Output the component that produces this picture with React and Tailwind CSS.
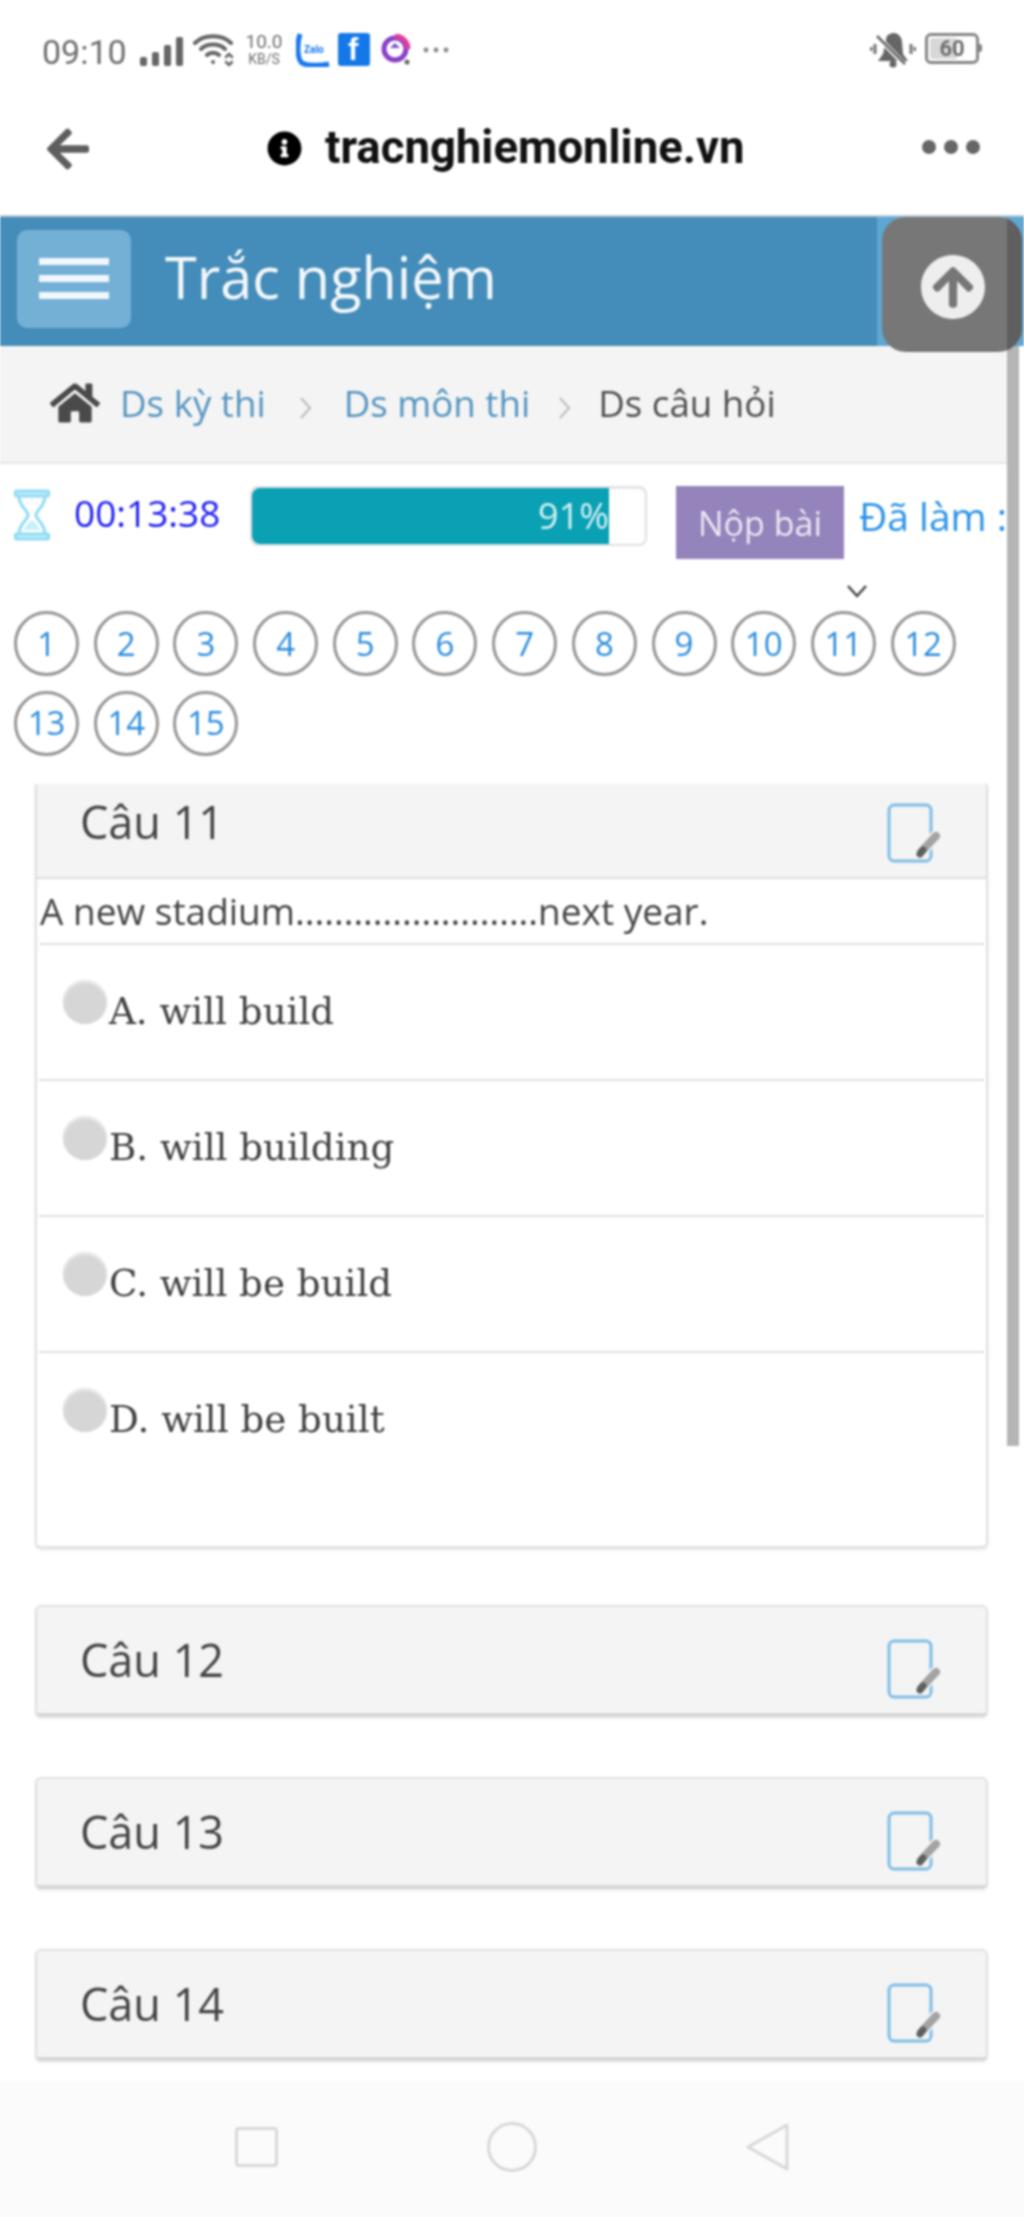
import React from "react";
import { FaHome, FaArrowCircleUp, FaInfoCircle, FaArrowLeft } from "react-icons/fa";

const OPEN = "font-['Open_Sans','Noto_Sans',sans-serif]";

function NoteIcon() {
  return (
    <svg width="58" height="62" viewBox="0 0 58 62" fill="none">
      <rect x="2" y="2" width="42" height="56" rx="5" stroke="#7dbce8" strokeWidth="3" />
      <path d="M34 49 L49 33" stroke="#f4f4f4" strokeWidth="12" strokeLinecap="round" />
      <path d="M34 49 L49 33" stroke="#a3a3a3" strokeWidth="8" strokeLinecap="round" />
      <path d="M33 51 L36 47" stroke="#5f5f5f" strokeWidth="7" strokeLinecap="round" />
    </svg>
  );
}

function StatusBar() {
  return (
    <div className="h-[75px] flex items-start pl-[42px] pr-[42px] pt-[34px] text-[#6e6e6e]">
      <span className="font-['Roboto',sans-serif] text-[34px] leading-[36px] w-[98px]">09:10</span>
      <svg width="44" height="30" viewBox="0 0 44 30" className="mt-[3px]" fill="#666">
        <rect x="0" y="20" width="7" height="9" rx="2" />
        <rect x="12" y="15" width="7" height="14" rx="2" />
        <rect x="24" y="8" width="7" height="21" rx="2" />
        <rect x="36" y="0" width="7" height="29" rx="2" />
      </svg>
      <svg width="42" height="34" viewBox="0 0 42 34" className="ml-[9px] -mt-[1px]" fill="none" stroke="#666" strokeWidth="4" strokeLinecap="round">
        <path d="M2 10 C11 1 29 1 38 10" />
        <path d="M8 16 C14 10 26 10 32 16" />
        <path d="M14 22 C17 19 23 19 26 22" />
        <circle cx="20" cy="29" r="2" fill="#666" stroke="none" />
        <path d="M33 24 l3 -3 l3 3 M33 29 l3 3 l3 -3" strokeWidth="2.5" />
      </svg>
      <div className="ml-[6px] -mt-[2px] w-[46px] flex flex-col gap-[1px] font-['Roboto',sans-serif] text-center">
        <span className="text-[19px] leading-[19px]">10.0</span>
        <span className="text-[14px] leading-[14px]">KB/S</span>
      </div>
      <svg width="34" height="34" viewBox="0 0 34 34" className="ml-[9px] -mt-[1px]">
        <path d="M4 1 C1 10 1 24 5 29 C8 33 24 33 33 31" fill="none" stroke="#1878ef" strokeWidth="5" />
        <text x="8" y="20" fontSize="10" fontWeight="700" fill="#1878ef" fontFamily="Roboto, sans-serif">Zalo</text>
      </svg>
      <div className="ml-[8px] -mt-[1px] w-[32px] h-[33px] rounded-[3px] bg-[#1478e8] relative">
        <span className="absolute left-[10px] top-[1px] font-['Liberation_Sans',sans-serif] font-bold text-white text-[31px] leading-[32px]">f</span>
      </div>
      <svg width="32" height="32" viewBox="0 0 32 32" className="ml-[10px]">
        <circle cx="15" cy="15" r="11" fill="none" stroke="#8a3fc8" strokeWidth="5" />
        <path d="M15 2 A13 13 0 0 1 28 15" fill="none" stroke="#e0409a" strokeWidth="5" />
        <path d="M15 9 l5 5 h-10 z" fill="#7a50d0" />
        <circle cx="27" cy="28" r="2.5" fill="#666" />
      </svg>
      <svg width="26" height="6" viewBox="0 0 26 6" className="ml-[11px] mt-[13px]" fill="#888">
        <circle cx="3" cy="3" r="2.4" />
        <circle cx="13" cy="3" r="2.4" />
        <circle cx="23" cy="3" r="2.4" />
      </svg>
      <div className="flex-1" />
      <svg width="46" height="36" viewBox="0 0 46 36" className="-mt-[2px]">
        <path d="M16 8 C16 3 20 1 24 1 C28 1 32 5 32 10 L33 22 L38 29 L8 29 L13 22 Z" fill="#666" />
        <circle cx="23" cy="32" r="3.5" fill="#666" />
        <path d="M8 5 L35 33" stroke="#fff" strokeWidth="5" />
        <path d="M7 4 L35 32" stroke="#666" strokeWidth="2.5" />
        <path d="M5 12 v10 M1 15 v4 M41 12 v10 M45 15 v4" stroke="#777" strokeWidth="3" />
      </svg>
      <div className="ml-[9px] -mt-[1px] relative w-[54px] h-[31px] rounded-[6px] border-[3px] border-[#858585] font-['Roboto',sans-serif]">
        <div className="absolute left-[2px] top-[2px] bottom-[2px] w-[27px] bg-[#d8d8d8] rounded-[2px]" />
        <span className="absolute inset-0 text-center text-[22px] font-bold leading-[25px] text-[#6e6e6e]">60</span>
      </div>
      <div className="w-[3px] h-[8px] bg-[#858585] mt-[10px] rounded-r-[2px]" />
    </div>
  );
}

function UrlBar() {
  return (
    <div className="h-[140px] relative flex items-center pl-[267px] pt-[6px]">
      <FaArrowLeft className="absolute left-[44px] top-[50px] text-[#5e5e5e]" size={48} />
      <FaInfoCircle className="text-black" size={35} />
      <span className="ml-[23px] font-['Roboto',sans-serif] font-bold text-[45.5px] leading-[50px] text-[#111]">tracnghiemonline.vn</span>
      <div className="absolute right-[44px] top-[65px] flex gap-[8px]">
        <span className="w-[14px] h-[14px] rounded-full bg-[#666]" />
        <span className="w-[14px] h-[14px] rounded-full bg-[#666]" />
        <span className="w-[14px] h-[14px] rounded-full bg-[#666]" />
      </div>
    </div>
  );
}

function Header() {
  return (
    <div className="relative h-[131px] bg-[#448cb9] border-t-2 border-[#b9c9d3] flex items-center pl-[17px] pb-[6px]">
      <div className="w-[114px] h-[98px] rounded-[10px] bg-[#74b0d6] flex flex-col items-center justify-center gap-[10px]">
        <span className="block w-[70px] h-[7px] bg-[#f2f7fb]" />
        <span className="block w-[70px] h-[7px] bg-[#f2f7fb]" />
        <span className="block w-[70px] h-[7px] bg-[#f2f7fb]" />
      </div>
      <span className={`${OPEN} ml-[34px] text-[57.6px] leading-[70px] font-normal text-[#f3f8fb] -mt-[4px]`}>Trắc nghiệm</span>
      <div className="absolute right-0 top-0 bottom-0 w-[147px] bg-[#5fa6d2]" />
    </div>
  );
}

function Sep({ m }) {
  return (
    <svg width="14" height="24" viewBox="0 0 14 24" fill="none" stroke="#bcbcbc" strokeWidth="2" className={m}>
      <path d="M3 2 L12 12 L3 22" />
    </svg>
  );
}

function Breadcrumb() {
  return (
    <div className={`${OPEN} h-[118px] bg-[#f4f4f4] border-b-2 border-[#e6e6e6] flex items-start pl-[50px] pt-[32px] text-[36.7px] leading-[50px]`}>
      <FaHome className="text-[#4a4a4a]" size={50} />
      <span className="ml-[20px] text-[#5595c0]">Ds kỳ thi</span>
      <Sep m="mx-[32px] mt-[18px]" />
      <span className="text-[#5595c0]">Ds môn thi</span>
      <Sep m="mx-[27px] mt-[18px]" />
      <span className="text-[#4f4f4f]">Ds câu hỏi</span>
    </div>
  );
}

function TimerRow() {
  return (
    <div className={`${OPEN} h-[147px] flex items-start pt-[22px]`}>
      <svg width="36" height="52" viewBox="0 0 36 52" className="ml-[14px] mt-[3px]" fill="none" stroke="#8fdcf5" strokeWidth="3">
        <rect x="1.5" y="2" width="33" height="5" rx="1" fill="#c9effa" />
        <rect x="1.5" y="45" width="33" height="5" rx="1" fill="#c9effa" />
        <path d="M5 7 C5 18 14 21 14 26 C14 31 5 34 5 45 M31 7 C31 18 22 21 22 26 C22 31 31 34 31 45" />
        <path d="M10 41 C12 35 16 33 18 31 C20 33 24 35 26 41 Z" fill="#c9effa" stroke="none" />
      </svg>
      <span className="ml-[24px] w-[176px] text-[37px] leading-[50px] text-[#1c1cf5] mt-[2px]">00:13:38</span>
      <div className="relative w-[397px] h-[60px] rounded-[8px] border-2 border-[#e0e0e0] bg-white shadow-[inset_0_1px_2px_rgba(0,0,0,0.08)]">
        <div className="h-full w-[357px] bg-[#0aa1b4] rounded-[8px] rounded-r-none text-right text-[36px] leading-[56px] text-[#d8f1f4] font-normal">91%</div>
      </div>
      <button className="ml-[29px] w-[168px] h-[73px] bg-[#9583bb] text-[34px] leading-[75px] text-[#ece8f3] text-center">Nộp bài</button>
      <span className="ml-[15px] text-[39px] leading-[50px] text-[#2a92e8] whitespace-nowrap mt-[5px]">Đã làm :</span>
    </div>
  );
}

const NUMS = [1, 2, 3, 4, 5, 6, 7, 8, 9, 10, 11, 12, 13, 14, 15];

function Numbers() {
  return (
    <div className={`${OPEN} grid grid-cols-[repeat(12,65px)] gap-x-[14.7px] gap-y-[14.5px] pl-[14px]`}>
      {NUMS.map((n) => (
        <div key={n} className="relative w-[65px] h-[65px] rounded-full border-[3px] border-[#969696] flex items-center justify-center text-[33px] text-[#2a8cde]">
          {n}
          {n === 11 && (
            <svg width="22" height="14" viewBox="0 0 22 14" className="absolute left-[32px] -top-[30px]" fill="none" stroke="#444" strokeWidth="2.5">
              <path d="M2 2 L11 12 L20 2" />
            </svg>
          )}
        </div>
      ))}
    </div>
  );
}

function Option({ label, last }) {
  return (
    <div className={`mx-[2px] flex items-start pl-[24px] ${last ? "h-[193px]" : "h-[136px] border-b-2 border-[#e0e0e0]"} pt-[35px]`}>
      <span className="w-[44px] h-[44px] rounded-full bg-[#d6d6d6] shadow-[inset_0_2px_3px_rgba(255,255,255,0.7),0_0_1px_rgba(0,0,0,0.2)] shrink-0" />
      <span className="ml-[2px] mt-[6px] font-['DejaVu_Serif',serif] text-[37.2px] leading-[50px] text-[#404040]">{label}</span>
    </div>
  );
}

function OpenCard() {
  return (
    <div className={`${OPEN} ml-[35px] mr-[36px] mt-[28px] border-x-2 border-b-2 border-[#e0e0e0] rounded-b-[6px] shadow-[0_2px_3px_rgba(0,0,0,0.1)] bg-white`}>
      <div className="h-[95px] bg-[#f4f4f4] border-b-2 border-[#dcdcdc] flex items-start justify-between pl-[43px] pr-[41px]">
        <span className="text-[45px] leading-[60px] text-[#444] mt-[8px]">Câu 11</span>
        <div className="mt-[19px]"><NoteIcon /></div>
      </div>
      <div className="ml-[3px] mr-[2px] h-[66px] border-b-2 border-[#e0e0e0] text-[37px] leading-[63px] text-[#444] whitespace-nowrap">
        A new stadium.........................next year.
      </div>
      <Option label="A. will build" />
      <Option label="B. will building" />
      <Option label="C. will be build" />
      <Option label="D. will be built" last />
    </div>
  );
}

function ClosedCard({ label }) {
  return (
    <div className={`${OPEN} ml-[35px] mr-[36px] h-[112px] bg-[#f4f4f4] rounded-[6px] border-2 border-[#e0e0e0] border-b-[4px] border-b-[#d8d8d8] shadow-[0_2px_3px_rgba(0,0,0,0.08)] flex items-start justify-between pl-[43px] pr-[41px]`}>
      <span className="text-[45px] leading-[60px] text-[#444] mt-[23px]">{label}</span>
      <div className="mt-[32px]"><NoteIcon /></div>
    </div>
  );
}

function NavBar() {
  return (
    <div className="mt-[20px] h-[140px] bg-[#fbfbfb] flex items-start pt-[41px] relative">
      <div className="ml-[235px] mt-[5px] w-[43px] h-[40px] rounded-[4px] border-[3px] border-[#d8d8d8]" />
      <div className="ml-[209px] w-[50px] h-[50px] rounded-full border-[3px] border-[#d8d8d8]" />
      <svg width="46" height="50" viewBox="0 0 46 50" fill="none" stroke="#d8d8d8" strokeWidth="3" strokeLinejoin="round" className="ml-[208px]">
        <path d="M42 3 L3 25 L42 47 Z" />
      </svg>
    </div>
  );
}

export default function App() {
  return (
    <div className="relative w-[1024px] h-[2217px] overflow-hidden bg-white blur-[0.8px]">
      <StatusBar />
      <UrlBar />
      <Header />
      <Breadcrumb />
      <TimerRow />
      <Numbers />
      <OpenCard />
      <div className="mt-[57px] flex flex-col gap-[60px]">
        <ClosedCard label="Câu 12" />
        <ClosedCard label="Câu 13" />
        <ClosedCard label="Câu 14" />
      </div>
      <NavBar />
      <div className="absolute left-[1007px] top-[346px] w-[17px] h-[1100px] bg-white" />
      <div className="absolute left-[1007px] top-[346px] w-[12px] h-[1100px] bg-[#b5b5b5]" />
      <div className="absolute left-[882px] top-[217px] w-[140px] h-[135px] rounded-[24px] bg-[#777777] overflow-hidden flex items-center justify-center">
        <div className="absolute right-0 top-0 bottom-0 w-[15px] bg-[#5f5f5f]" />
        <FaArrowCircleUp className="text-[#eeeeee] ml-[2px] mt-[5px]" size={66} />
      </div>
    </div>
  );
}
